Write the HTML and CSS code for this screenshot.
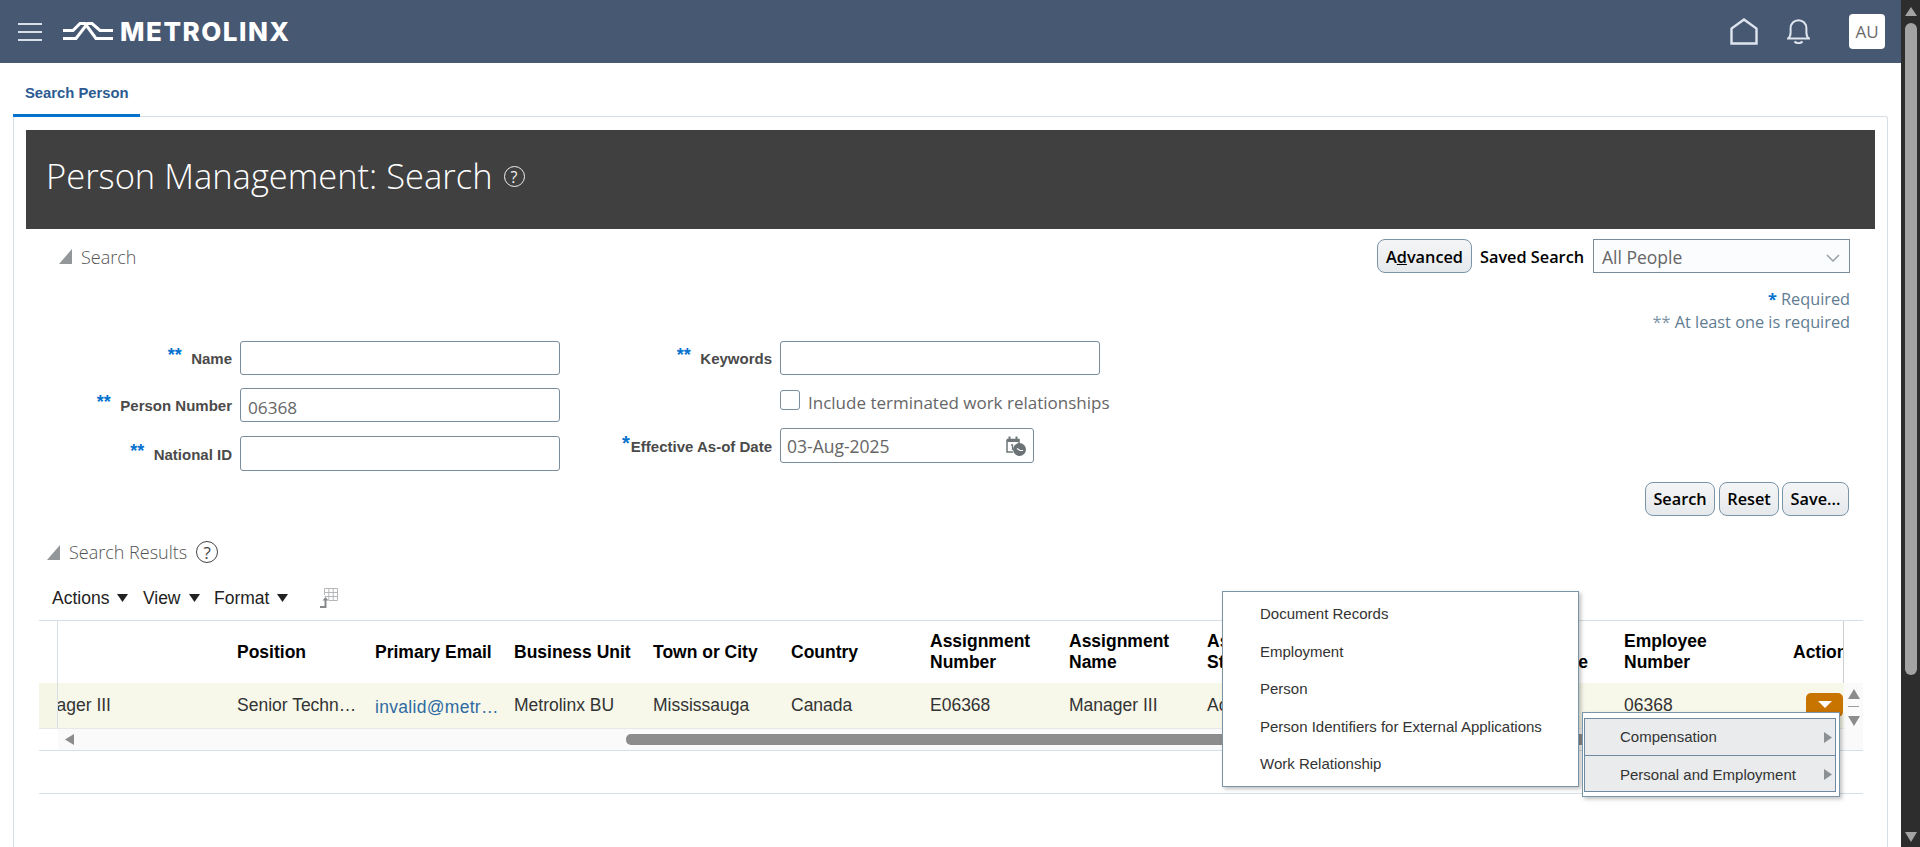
FILE: index.html
```html
<!DOCTYPE html>
<html lang="en">
<head>
<meta charset="utf-8">
<title>Person Management: Search</title>
<link rel="stylesheet" href="styles.css">
</head>
<body>
<div class="app">
  <div class="page">
    <header class="topbar">
      <div class="burger"><i></i><i></i><i></i></div>
      <svg class="mark" width="50" height="20" viewBox="0 0 50 20" fill="none" stroke="#fff" stroke-width="3"><path d="M0 8.5H10L17 1.5H22L33 16.5H50"/><path d="M0 16.5H13L24.5 1.5H29L37 8.5H50"/></svg>
      <span class="brand">METROLINX</span>
      <svg class="home" width="28" height="27" viewBox="0 0 28 27" fill="none" stroke="#dfe5ee" stroke-width="2.4"><path d="M1.5 25.5V10.5L14 1.5L26.5 10.5V25.5Z"/></svg>
      <svg class="bell" width="23" height="25" viewBox="0 0 23 25" fill="none" stroke="#dfe5ee" stroke-width="2"><path d="M1 19.5c2-1.5 2.6-3 2.6-6V9.2C3.6 4.6 7 1.2 11.5 1.2s7.900 3.400 7.900 8v4.300c0 3 .6 4.500 2.600 6Z"/><path d="M7.500 22.500c1.200 1.300 2.500 1.800 4 1.800s2.800-.5 4-1.800"/></svg>
      <div class="avatar">AU</div>
    </header>

    <nav class="tabs"><a class="tab">Search Person</a></nav>

    <main class="panel">
      <div class="band">
        <h1 class="title">Person Management: Search</h1>
        <span class="help help-light">?</span>
      </div>

      <section class="search">
        <div class="search-head">
          <div class="sec-title">
            <svg class="disc" width="13" height="15" viewBox="0 0 13 15"><path d="M13 0V15H0Z" fill="#949799"/></svg>
            <span class="sec-name">Search</span>
          </div>
          <div class="saved">
            <button class="btn btn-adv">A<u>d</u>vanced</button>
            <span class="saved-label">Saved Search</span>
            <div class="select"><span>All People</span>
              <svg width="14" height="8" viewBox="0 0 14 8" fill="none" stroke="#9aa3a8" stroke-width="1.600"><path d="M1 1L7 7L13 1"/></svg>
            </div>
          </div>
        </div>

        <div class="notes">
          <div><span class="star-note">*</span> Required</div>
          <div><span class="stars-grey">**</span> At least one is required</div>
        </div>

        <div class="form">
          <div class="fields fields-left">
            <div class="row"><label class="lab lab-l"><span class="star">**</span><span class="lab-t">Name</span></label><div class="inp inp-w"></div></div>
            <div class="row"><label class="lab lab-l"><span class="star">**</span><span class="lab-t">Person Number</span></label><div class="inp inp-w">06368</div></div>
            <div class="row row-tall"><label class="lab lab-l"><span class="star">**</span><span class="lab-t">National ID</span></label><div class="inp inp-w inp-tall"></div></div>
          </div>
          <div class="fields fields-right">
            <div class="row"><label class="lab lab-r"><span class="star">**</span><span class="lab-t">Keywords</span></label><div class="inp inp-w"></div></div>
            <div class="row row-check"><span class="lab-r"></span><span class="check"></span><span class="check-label">Include terminated work relationships</span></div>
            <div class="row row-date"><label class="lab lab-r"><span class="star star-tight">*</span><span>Effective As-of Date</span></label>
              <div class="inp inp-date">03-Aug-2025
                <svg width="20" height="21" viewBox="0 0 20 21"><path d="M1 4.500H13V9M1 4.500V17H7" fill="none" stroke="#6f767a" stroke-width="1.500"/><path d="M3.500 1.500V6M10.500 1.500V6" stroke="#6f767a" stroke-width="2"/><path d="M1 4H13V7H1Z" fill="#6f767a"/><path d="M5 10H6.500V15" fill="none" stroke="#6f767a" stroke-width="1.300"/><circle cx="13.500" cy="14.500" r="6.500" fill="#6b7276"/><path d="M11 13.500L14 15.500H17" stroke="#fff" stroke-width="1.200" fill="none"/></svg>
              </div>
            </div>
          </div>
        </div>

        <div class="actions">
          <button class="btn btn-search">Search</button>
          <button class="btn btn-reset">Reset</button>
          <button class="btn btn-save">Save...</button>
        </div>
      </section>

      <section class="results">
        <div class="res-head">
          <svg class="disc" width="13" height="15" viewBox="0 0 13 15"><path d="M13 0V15H0Z" fill="#949799"/></svg>
          <span class="res-name">Search Results</span>
          <span class="help help-dark">?</span>
        </div>
        <div class="toolbar">
          <span class="tool">Actions</span><svg class="tri" width="11" height="8" viewBox="0 0 11 8"><path d="M0 0H11L5.500 8Z"/></svg>
          <span class="tool">View</span><svg class="tri" width="11" height="8" viewBox="0 0 11 8"><path d="M0 0H11L5.500 8Z"/></svg>
          <span class="tool">Format</span><svg class="tri" width="11" height="8" viewBox="0 0 11 8"><path d="M0 0H11L5.500 8Z"/></svg>
          <svg class="detach" width="18" height="20" viewBox="0 0 18 20" fill="none"><path d="M4.500 .5H17.500V12.500H9M4.500 .5V7M4.500 4.500H17.500M4.500 8.500H17.500M8.800 .5V12.500M13.200 .5V12.500" stroke="#b5b8ba"/><path d="M0 19H5.500V12" stroke="#85898c" stroke-width="2"/><path d="M2.500 12.500L5.500 9L8.500 12.500Z" fill="#85898c"/></svg>
        </div>

        <div class="table">
          <div class="gut gut-line"></div>
          <div class="cols thead">
            <div class="c"></div>
            <div class="c">Position</div>
            <div class="c">Primary Email</div>
            <div class="c">Business Unit</div>
            <div class="c">Town or City</div>
            <div class="c">Country</div>
            <div class="c">Assignment<br>Number</div>
            <div class="c">Assignment<br>Name</div>
            <div class="c">Assignment<br>Status</div>
            <div class="c"></div>
            <div class="c c-end"><span class="l1">Assignment</span><span class="l2">Type</span></div>
            <div class="c">Employee<br>Number</div>
            <div class="c c-clip">Actions</div>
          </div>
          <div class="side-h"></div>

          <div class="gut gut-line gut-r"></div>
          <div class="cols tbody">
            <div class="c c-first"><span>Manager III</span></div>
            <div class="c"><span class="ell">Senior Technician</span></div>
            <div class="c"><a class="ell email">invalid@metrolinx.com</a></div>
            <div class="c">Metrolinx BU</div>
            <div class="c">Mississauga</div>
            <div class="c">Canada</div>
            <div class="c">E06368</div>
            <div class="c">Manager III</div>
            <div class="c">Active</div>
            <div class="c"></div>
            <div class="c"></div>
            <div class="c">06368</div>
            <div class="c c-act"><span class="act-btn"><svg width="14" height="7" viewBox="0 0 14 7"><path d="M0 0H14L7 7Z" fill="#fff"/></svg></span></div>
          </div>
          <div class="vbar">
            <svg width="12" height="10" viewBox="0 0 12 10"><path d="M6 0L12 10H0Z" fill="#8c8c8c"/></svg>
            <i class="vsep"></i>
            <svg width="12" height="10" viewBox="0 0 12 10"><path d="M0 0H12L6 10Z" fill="#8c8c8c"/></svg>
          </div>

          <div class="gut"></div>
          <div class="hbar">
            <svg width="9" height="11" viewBox="0 0 9 11"><path d="M9 0V11L0 5.500Z" fill="#8c8c8c"/></svg>
            <div class="thumb"></div>
          </div>
        </div>
        <div class="footer-line"></div>
      </section>
    </main>

    <div class="menu menu-main">
      <div class="mi">Document Records</div>
      <div class="mi">Employment</div>
      <div class="mi">Person</div>
      <div class="mi">Person Identifiers for External Applications</div>
      <div class="mi">Work Relationship</div>
    </div>
    <div class="menu menu-act">
      <div class="mg mg-1">Compensation<svg width="8" height="11" viewBox="0 0 8 11"><path d="M0 0L8 5.500L0 11Z" fill="#8a9094"/></svg></div>
      <div class="mg mg-2">Personal and Employment<svg width="8" height="11" viewBox="0 0 8 11"><path d="M0 0L8 5.500L0 11Z" fill="#8a9094"/></svg></div>
    </div>
  </div>

  <div class="vscroll">
    <svg width="12" height="9" viewBox="0 0 12 9"><path d="M6 0L12 9H0Z" fill="#a3a3a3"/></svg>
    <div class="vthumb"></div>
    <svg class="vdown" width="12" height="10" viewBox="0 0 12 10"><path d="M0 0H12L6 10Z" fill="#a3a3a3"/></svg>
  </div>
</div>
</body>
</html>
```

FILE: styles.css
```css
* { box-sizing: border-box; }
html, body { margin: 0; height: 100%; overflow: hidden; background: #fff; }
body { font-family: "Liberation Sans", Arial, sans-serif; color: #333; }
.app { display: flex; width: 1920px; height: 847px; overflow: hidden; }
.page { position: relative; width: 1901px; height: 847px; display: flex; flex-direction: column; }

.vscroll { width: 19px; background: #2d2d2d; display: flex; flex-direction: column; padding: 7px 0 5px 4px; }
.vthumb { width: 12px; height: 652px; margin-top: 7px; background: #a3a3a3; border-radius: 6px; }
.vdown { margin-top: auto; }

.topbar { height: 63px; flex: none; background: #475873; display: flex; align-items: center; }
.burger { width: 24px; margin-left: 18px; display: flex; flex-direction: column; gap: 6px; }
.burger i { display: block; height: 2px; background: #d9dfe8; }
.mark { margin-left: 21px; }
.brand { margin-left: 7px; font: 800 26px/1 Inter, "Liberation Sans", sans-serif; color: #fff; letter-spacing: 1.500px; }
.home { margin-left: auto; }
.bell { margin-left: 29px; }
.avatar { width: 36px; height: 35px; margin: 0 16px 0 39px; background: #fff; border-radius: 4px; color: #6a6a6a; font: 400 17px/35px "Open Sans", sans-serif; text-align: center; }

.tabs { height: 54px; flex: none; padding-left: 13px; display: flex; align-items: flex-end; position: relative; z-index: 1; }
.tab { width: 127px; height: 54px; padding: 22px 0 0 12px; border-bottom: 3px solid #0572ce; font: 700 14.800px/17px "Liberation Sans", sans-serif; color: #2c5b92; }

.panel { margin: -1px 0 0 13px; width: 1875px; flex: 1; min-height: 0; border: 1px solid #d6dfe6; border-bottom: 0; border-radius: 3px 3px 0 0; padding: 13px 12px 0; overflow: hidden; }

.band { height: 99px; background: #404040; display: flex; align-items: center; padding: 0 0 6px 20px; }
.title { margin: 0; font: 300 34.500px/1 "Open Sans", sans-serif; color: #fff; }
.help { display: inline-flex; align-items: center; justify-content: center; border-radius: 50%; font-family: "Open Sans", sans-serif; }
.help-light { width: 21px; height: 21px; margin-left: 11px; border: 1.500px solid #f0f0f0; color: #f0f0f0; font-size: 16px; }
.help-dark { width: 22px; height: 22px; margin-left: 9px; border: 1.500px solid #444; color: #444; font-size: 17px; }

.search { padding: 10px 0 0; }
.search-head { display: flex; justify-content: space-between; align-items: center; height: 34px; padding: 0 25px 0 33px; }
.sec-title { display: flex; align-items: center; }
.sec-name { margin-left: 9px; padding-top: 2px; font: 300 18px/1 "Open Sans", sans-serif; color: #555; }
.saved { display: flex; align-items: center; }
.btn { border: 1px solid #7a94a8; border-radius: 8px; background: linear-gradient(#f4f5f6, #e6e9ec); font: 600 16.300px/1 "Open Sans", sans-serif; color: #000; padding: 0; height: 34px; text-align: center; }
.btn-adv { width: 95px; padding-top: 2px; }
.saved-label { margin-left: 8px; padding-top: 2px; font: 600 16.300px/1 "Open Sans", sans-serif; color: #000; width: 113px; white-space: nowrap; }
.select { width: 257px; height: 34px; border: 1px solid #7a8d9c; background: #fbfcfd; display: flex; align-items: center; justify-content: space-between; padding: 3px 9px 0 8px; font: 400 17.500px/1 "Open Sans", sans-serif; color: #666; }

.notes { margin-top: 14px; height: 54px; padding: 1px 25px 0 0; text-align: right; font: 400 16.300px/23px "Open Sans", sans-serif; color: #5f7c92; }
.star-note { color: #0572ce; font-weight: 700; }
.stars-grey { color: #7c93a5; }

.form { display: flex; }
.fields { display: flex; flex-direction: column; }
.fields-left { gap: 13px; }
.row { display: flex; align-items: center; gap: 8px; }
.row-tall { margin-top: 1px; }
.lab { display: flex; justify-content: flex-end; align-items: center; padding-top: 2px; font: 700 15px/18px "Liberation Sans", sans-serif; color: #4a4a4a; }
.lab-l { width: 206px; }
.lab-r { width: 212px; flex: none; }
.star { color: #0572ce; font-size: 18px; font-weight: 700; margin-right: 9.500px; transform: translateY(-4px); }
.star-tight { margin-right: 1px; font-size: 20px; }
.inp { height: 34px; border: 1px solid #7a8d9c; border-radius: 3px; background: #fff; padding: 5px 7px 0; font: 400 17.200px/28px "Open Sans", sans-serif; color: #666; }
.inp-w { width: 320px; }
.inp-tall { height: 35px; }
.inp-date { width: 254px; height: 35px; display: flex; justify-content: space-between; align-items: center; padding: 0 7px 0 6px; font-size: 17.500px; }
.row-check { height: 20px; margin: 15px 0 18px; }
.check { width: 20px; height: 20px; flex: none; border: 1px solid #7a8d9c; border-radius: 3px; }
.check-label { margin-top: 5px; font: 400 17px/20px "Open Sans", sans-serif; color: #666; }

.actions { display: flex; justify-content: flex-end; gap: 4px; margin-top: 11px; padding-right: 26px; }
.btn-search { width: 70px; }
.btn-reset { width: 60px; }
.btn-save { width: 67px; margin-left: -1px; }

.res-head { margin-top: 25px; height: 22px; padding-left: 21px; display: flex; align-items: center; }
.res-name { margin-left: 9px; font: 300 18px/1 "Open Sans", sans-serif; color: #555; }

.toolbar { height: 22px; margin: 24px 0 11px; padding-left: 26px; display: flex; align-items: center; font: 400 17.500px/22px "Liberation Sans", sans-serif; color: #222; }
.tri { margin: 0 14.500px 0 8px; }
.tri path { fill: #222; }
.detach { margin-left: 17px; }

.table { margin-left: 13px; width: 1824px; display: grid; grid-template-columns: 19px 1786px 19px; grid-template-rows: 62px 46px 21px; border-top: 1px solid #d6dfe6; border-bottom: 1px solid #d6dfe6; font: 400 17.500px/21px "Liberation Sans", sans-serif; }
.gut-line { border-right: 1px solid #d6dfe6; }
.gut-r { background: #f5f6e6; border-bottom: 1px solid #e6e9ec; }
.side-h { border-left: 1px solid #c9ced2; margin-left: -1px; }
.cols { display: grid; grid-template-columns: 179px 138px 139px 139px 138px 139px 139px 138px 139px 139px 139px 169px 50px; align-items: center; min-width: 0; }
.thead { font-weight: 700; color: #000; }
.tbody { background: #f7f8ea; border-bottom: 1px solid #e6e9ec; color: #333; }
.c { min-width: 0; white-space: nowrap; }
.c-first { display: flex; justify-content: flex-end; overflow: hidden; padding-right: 126px; }
.c-first span { flex: none; }
.c-end { margin-left: -8px; padding-right: 36px; }
.l1, .l2 { display: block; }
.l2 { text-align: right; }
.c-clip { overflow: hidden; }
.c-act { align-self: start; padding: 10px 0 0 13px; }
.act-btn { display: flex; width: 37px; height: 24px; padding-top: 8px; justify-content: center; align-items: flex-start; border-radius: 5px; background: #c87400; }
.ell { display: block; width: 122.500px; overflow: hidden; text-overflow: ellipsis; }
.email { width: 124px; color: #2f6aa3; transform: translateY(2px); letter-spacing: .3px; }
.vbar { grid-row: 2 / 4; grid-column: 3; background: #fafafa; padding: 6px 0 0 4px; display: flex; flex-direction: column; align-items: flex-start; }
.vsep { width: 11px; height: 1px; margin: 7px 0 9px; background: #9a9a9a; }
.hbar { background: #fafafa; display: flex; align-items: center; padding-left: 7px; }
.thumb { width: 964px; height: 11px; margin-left: 552px; background: #8c8c8c; border-radius: 5px; }
.footer-line { height: 1px; margin: 42px 0 0 13px; width: 1824px; background: #d6dfe6; }

.menu { position: absolute; z-index: 5; background: #fff; border: 1px solid #7a94a8; box-shadow: 2px 2px 4px rgba(0,0,0,.25); font: 400 15px/18px "Liberation Sans", sans-serif; color: #333; }
.menu-main { left: 1222px; top: 591px; width: 357px; height: 196px; padding: 3.500px 0; }
.mi { height: 37.500px; padding-left: 37px; display: flex; align-items: center; white-space: nowrap; }
.menu-act { left: 1582px; top: 712px; width: 258px; height: 85px; padding: 5px 3px 4px 1px; }
.mg { display: flex; align-items: center; justify-content: space-between; padding: 0 3px 0 35px; background: #e9ebed; border: 1px solid #6f8aa0; }
.mg-1 { height: 38px; }
.mg-2 { height: 37px; margin-top: -1px; padding-top: 2px; }
```
